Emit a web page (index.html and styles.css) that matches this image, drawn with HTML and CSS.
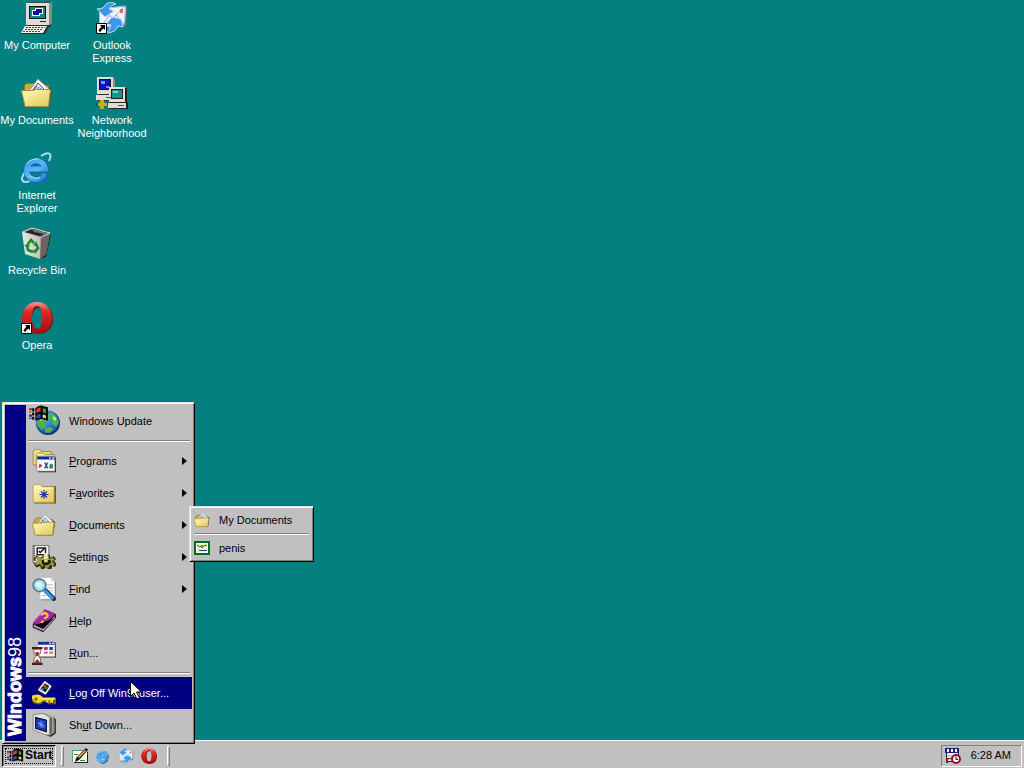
FILE: index.html
```html
<!DOCTYPE html>
<html lang="en">
<head>
<meta charset="utf-8">
<title>Desktop</title>
<link rel="stylesheet" href="styles.css">
</head>
<body>
<svg class="defs" aria-hidden="true">
  <defs>
    <linearGradient id="paper-yellow" x1="0" y1="0" x2="1" y2="1"><stop offset="0" stop-color="#fff9b8"/><stop offset="1" stop-color="#e2c85c"/></linearGradient>
    <linearGradient id="opera-red" x1="0" y1="0" x2="0" y2="1"><stop offset="0" stop-color="#f29a90"/><stop offset=".3" stop-color="#e02a24"/><stop offset="1" stop-color="#a80d10"/></linearGradient>
    <linearGradient id="ie-blue" x1="0" y1="0" x2="1" y2="1"><stop offset="0" stop-color="#3f9bee"/><stop offset=".5" stop-color="#5cb8f8"/><stop offset="1" stop-color="#2277d2"/></linearGradient>
    <linearGradient id="bin-grey" x1="0" y1="0" x2="1" y2="0"><stop offset="0" stop-color="#e8e8e0"/><stop offset=".6" stop-color="#c4c4bc"/><stop offset="1" stop-color="#55504c"/></linearGradient>
    <radialGradient id="globe-blue" cx=".4" cy=".35" r=".7"><stop offset="0" stop-color="#5aa8f4"/><stop offset="1" stop-color="#1748b0"/></radialGradient>
    <symbol id="shortcut" viewBox="0 0 11 11"><path fill="#fff" stroke="#000" d="M.5.5h10v10H.5z"/><path d="M4 2h5v5L7.500 5.500Q5 7 4.500 9L2.500 8Q3 5.500 5.500 3.700z"/></symbol>
    <symbol id="computer" viewBox="0 0 32 32"><path fill="#444" d="M7 2l2-2h22v22l-2 2H7z"/><path fill="#deded6" d="M5 1h23v22H5z"/><path fill="#8b8b86" d="M28 1l3-1v21l-3 3z"/><path fill="#111" d="M8 4h17v13H8z"/><path fill="#0c8a8a" d="M9 5h15v11H9z"/><path fill="#fff" d="M14 6h8v6h-8zM11 8h8v6h-8z"/><path fill="#1010a0" d="M15 7h6v4h-6zM12 9h6v4h-6z"/><path fill="#222" d="M19 19h6v1h-6z"/><path fill="#333" d="M5 23h25v2H5z"/><path fill="#2c2c2c" d="M4 25h24l-4 7H0z"/><path fill="#f2f2ea" d="M4 24h22l-4 7H0z"/><path stroke="#444" stroke-dasharray="2 1" d="M5 25.500h19M4 27.500h18M2 29.500h18"/></symbol>
    <symbol id="folder-open" viewBox="0 0 32 32"><path fill="#4f4614" d="M3 10h26l2 3-3 17H5z"/><path fill="#c9ab40" stroke="#8b7a28" d="M3.500 28V8.500l2-2h7l2 2h13V28z"/><path fill="#fff" stroke="#9a9a9a" d="M8 14L17 2l13 12-3 5H9z"/><path fill="#dfe8fa" stroke="#555" d="M11 14l6-8 8 8z"/><path stroke="#3b58a8" fill="none" d="M13 13l3-4M16 14l2-4M19 14l1-3"/><path fill="url(#paper-yellow)" stroke="#a58e38" d="M.500 13.500h12l2-1h15l-2 17H4z"/></symbol>
    <symbol id="ie" viewBox="0 0 32 32"><path fill="none" stroke="#a6dcfa" stroke-width="2" d="M20 4C27-1 32 1 28 9M4 20C-1 27 0 32 9 29"/><path fill="none" stroke="#1461bb" stroke-width="6" d="M24.500 22A9.500 9.500 0 1 1 25 17.500H8"/><path fill="none" stroke="url(#ie-blue)" stroke-width="5" d="M24 21.500A9.500 9.500 0 1 1 24.500 17H8"/><path stroke="#a9e2ff" fill="none" d="M6 12Q10 6 18 7M9 24q5 4 10 2"/></symbol>
    <symbol id="bin" viewBox="0 0 32 32"><path fill="#282522" d="M27 9l3-1-5 22-6 2z"/><path fill="#777" stroke="#d8d8d8" d="M1.500 5L11 1l18 5-9 5z"/><path fill="#26221f" d="M4 5l8-3 13 4-6 3z"/><path fill="#777" d="M11 2l15 4-3 1-10-2z"/><path fill="url(#bin-grey)" d="M1 5l19 6 9-4-4 20-6 5-15-5z"/><path fill="#6b6460" d="M20 11l9-4-4 20-6 5z"/><path fill="none" stroke="#16882e" stroke-width="2.500" d="M7 17l3-4 3 3M15 17l2 4-3 4M12 25l-5-2-1-4"/><path fill="#16882e" d="M12 18l4-4v5zM15 22v5l-4-3zM3 19l4-3 2 4z"/></symbol>
    <symbol id="opera" viewBox="0 0 32 32"><path fill="#7e1413" fill-rule="evenodd" d="M17 1c9 0 15 7 15 16S26 32 17 32 1 26 1 17 8 1 17 1zm0 5c-4 0-6 5-6 11s2 10 6 10 5-4 5-10-1-11-5-11z"/><path fill="url(#opera-red)" fill-rule="evenodd" d="M16 0c9 0 15 7 15 16s-6 15-15 15S1 25 1 16 7 0 16 0zm0 4c-4 0-5 5-5 12s1 11 5 11 5-4 5-11-1-12-5-12z"/></symbol>
    <symbol id="outlook" viewBox="0 0 32 32"><path fill="#627895" d="M5 8l26-3-1 19-25 4z"/><path fill="#eef3fb" stroke="#adbfd9" d="M3.500 7l26-3-1 18-25 4z"/><path fill="none" stroke="#8fa9cf" d="M4 7l13 9 12-12M4 26l9-12M28 22l-8-9"/><path fill="#e86b62" d="M24 7h3v4h-3z"/><path fill="#3f94ed" stroke="#b7dcff" d="M15 0Q9 1 7 6L1 7l8 8 9-6-5-2q2-4 7-5z"/><path fill="#3f94ed" stroke="#b7dcff" d="M25 17l-9-2-6 7 5 1q-1 5-5 8 10 0 12-7l5 1z"/></symbol>
    <symbol id="network" viewBox="0 0 32 32"><path fill="#333" d="M2 1h17v17h2v6H2z"/><path fill="#deded6" d="M1 0h16v17H1zM0 18h18v5H0z"/><path fill="#8c8c84" d="M17 0l2 2v15l-2-1z"/><path fill="#111" d="M3 2h12v11H3z"/><path fill="#1010bd" d="M4 3h10v9H4z"/><path fill="#6b9cff" d="M5 4h4v3H5zM10 9h3v2h-3z"/><path fill="#0b5a3c" d="M0 26h12v3H0z"/><path fill="#c7ad1e" d="M4 23h4v3h3v3H8v3H4v-3H2v-3h2z"/><path fill="#222" d="M14 11h17v14h1v7H13V11z"/><path fill="#deded6" d="M13 10h16v15H13zM12 26h18v5H12z"/><path fill="#222" d="M15 12h12v10H15z"/><path fill="#169485" d="M16 13h10v8H16z"/><path fill="#7cddc9" d="M17 14h5v2h-5z"/><path stroke="#555" d="M22 28.500h6M10 20.500h5"/></symbol>
    <symbol id="flag" viewBox="0 0 20 16"><path fill="#000" d="M7 3q4-4 8-2l4 1v13q-6-3-12 0zM4 3h2v3H4zM4 7h2v3H4zM4 11h2v3H4z"/><path fill="#b01c28" d="M1 3h3v2H1zM1 6h2v1H1z"/><path fill="#1c2f9c" d="M1 9h3v2H1zM1 12h3v1H1z"/><path fill="#e33b2d" d="M8 4q2-2 4-2v4q-2 0-4 2z"/><path fill="#3aa446" d="M14 3q2 0 3 1v4q-1-1-3-1z"/><path fill="#264bd2" d="M8 10q2-2 4-2v4q-2 0-4 1z"/><path fill="#f3d940" d="M14 9q2 0 3 1v3q-1-1-3-1z"/></symbol>
    <symbol id="update" viewBox="0 0 32 32"><circle cx="20" cy="18" r="12" fill="#102c5c"/><circle cx="19.500" cy="17" r="11.500" fill="url(#globe-blue)"/><path fill="#48b449" d="M9 14l7-6 6 2-1 5-4 2 1 5-4 3-5-5zM23 7l5 4 3 6-3 5-4-3-1-5-3-3zM17 23l5-1 4 2-5 4-4-1z"/><path fill="#c5efb4" d="M11 14l4-3 2 2-4 3zM25 11l3 2v3l-3-2z"/><use href="#flag" width="21" height="17"/></symbol>
    <symbol id="programs" viewBox="0 0 32 32"><path fill="#f1df82" stroke="#8b7a28" d="M1.500 21V3.500l2-3h7l2 3h13V21z"/><path fill="#fff7b0" stroke="#8b7a28" d="M5.500 25V7.500l2-2h7l2 2h13V25z"/><path fill="#222" d="M8 11h24v20H8z"/><path fill="#fff" stroke="#888" d="M6.500 9.500h24v20h-24z"/><path fill="#102b95" d="M7 10h23v4H7z"/><path fill="#fff" d="M23 11h2v2h-2zM27 11h2v2h-2z"/><path fill="#c43c5f" d="M10 19l4 3-4 4-1-3z"/><path fill="#273e91" d="M16 18h2l1 2 1-2h2l-2 4 2 4h-2l-1-2-1 2h-2l2-4z"/><path fill="#269458" d="M25 19l3 2v5h-5v-4z"/></symbol>
    <symbol id="favorites" viewBox="0 0 32 32"><path fill="#695e25" d="M3 7h29v23H3z"/><path fill="url(#paper-yellow)" stroke="#a89542" d="M1.500 28.500V7.500l2-3h8l2 3h16v21z"/><path stroke="#fff" d="M3 9.500h25"/><path stroke="#1933a4" stroke-width="1.500" d="M16 12v12M10 18h12M12 14l8 8M20 14l-8 8"/></symbol>
    <symbol id="settings" viewBox="0 0 32 32"><path fill="#f6f6f6" stroke="#444" d="M1.500.500h21v23h-21z"/><path fill="#fff" stroke="#222" stroke-width="2" d="M7 4h11v9H7z"/><path fill="none" stroke="#111" stroke-width="2" d="M9 8l2 2 6-6"/><path stroke="#555" fill="none" stroke-width="2" stroke-dasharray="2 1" d="M3 1v20M6 14v6"/><path fill="#33310d" d="M17 13h7v4l5-2 3 4-3 3 4 2-2 5-4-1-1 4h-5l-2-3-3 3h-4l-1-4-5 2-4-5 4-3-4-3 4-5 5 3z"/><path fill="#a39f40" d="M17 14h5l1 5 5-2 2 3-4 2 4 3-2 3-4-2-2 4h-4l-1-4-4 3-2-4-5 2-3-3 4-3-3-3 3-3 5 3 3-2z"/><path fill="#eee8a2" d="M16 11h5v8h-5zM4 18l4 2-2 2z"/><path fill="#22210a" d="M13 20h12v4l-4 3h-6l-2-3z"/><path fill="#d8d27c" d="M16 20h5v3h-5z"/></symbol>
    <symbol id="find" viewBox="0 0 32 32"><path fill="#777" d="M12 2h15l5 5v24H12z"/><path fill="#fff" stroke="#bbb" d="M10.500.500h15l5 5v24h-20z"/><path fill="#ddd" d="M25 1v5h6z"/><path stroke="#999" d="M19 10.500h9M20 14.500h8M20 18.500h8M13 24.500h5"/><path stroke="#0c3868" stroke-width="6" stroke-linecap="round" d="M18 18l11 11"/><path stroke="#3d9cea" stroke-width="4" stroke-linecap="round" d="M17 18l10 10"/><circle cx="10" cy="11" r="8.500" fill="#9adce8" stroke="#547b88" stroke-width="2"/><path stroke="#fff" stroke-width="2" d="M6 8h7M5 11h10M7 14h6"/></symbol>
    <symbol id="help" viewBox="0 0 32 32"><path fill="#42153f" d="M1 20L17 1l15 6v5L15 31 1 25z"/><path fill="#a326a0" d="M1 18L17 0l14 6-16 17z"/><path fill="#e8dee7" d="M3 21l12 5L30 10v3L15 29 3 24z"/><path stroke="#857384" d="M4 22l11 5 15-15M4 24l11 4"/><path stroke="#d774d6" d="M2 18L17 1"/><path fill="none" stroke="#ffc23c" stroke-width="3" d="M12 8q5-4 8-1t-4 6"/><path fill="#ffc23c" d="M13 15l3 1-2 3-3-1z"/></symbol>
    <symbol id="run" viewBox="0 0 32 32"><path fill="#222" d="M9 2h23v20H9z"/><path fill="#fff" stroke="#bbb" d="M7.500.500h23v20h-23z"/><path fill="#15329c" d="M8 1h22v4H8z"/><path fill="#fff" d="M23 2h2v2h-2zM27 2h2v2h-2z"/><path fill="#c93258" d="M16 8h5v4h-5z"/><path fill="#293fc5" d="M23 8h5v4h-5z"/><path fill="#e57934" d="M23 14h5v3h-5z"/><path fill="#c25fb4" d="M16 14h5v3h-5z"/><path fill="#4b1918" d="M0 8h14v3H0zM0 29h14v3H0z"/><path fill="#fff4e8" stroke="#753632" d="M2.500 11h9v5l-3 4 3 4v5h-9v-5l3-4-3-4z"/><path fill="#8b2d22" d="M4 15h6l-2 5H6zM3 29l4-5 4 5z"/></symbol>
    <symbol id="logoff" viewBox="0 0 32 32"><path fill="#fff" stroke="#b9b9a2" d="M17 0l9 7-8 11-10-6z"/><path fill="#111" d="M17 3l6 4-5 8-7-4z"/><path fill="#e24234" d="M16 4l3 2-2 3-3-2z"/><path fill="#38a448" d="M19 7l2 1-2 3-2-1z"/><path fill="#397be4" d="M14 9l2 1-1 3-3-2z"/><path fill="#70640b" d="M1 20h13v3h18v8h-5v-3h-2v3h-4v-3h-6q-2 4-8 3T0 27z"/><path fill="#f0d632" fill-rule="evenodd" d="M7 18q5 0 7 4h17v3h-3v4h-4v-3h-2v3h-3v-3h-5q-2 4-7 3T0 23t7-5zm-2 4q-3 1-1 4 4 1 3-3z"/><path stroke="#fff6a0" d="M13 23.500h16"/></symbol>
    <symbol id="shutdown" viewBox="0 0 32 32"><path fill="#30302e" d="M14 0l15 5 3 4v18l-7 5-7-3z"/><path fill="#bcbcb5" d="M14 0l15 5v21l-6 4-6-3z"/><path fill="#65655f" d="M24 5l3 2v19l-3 2zM29 8l2 3v15l-2 2z"/><path fill="#e6e6df" stroke="#777" d="M1.500 2.500l13-2 9 5v22l-4 2-18-7z"/><path fill="#090c36" d="M4 5l16 4v17L4 21z"/><path fill="#1936b6" d="M5 7l14 3v14L5 20z"/><path stroke="#91bfff" d="M12 10v10M8 14l9 3M9 18l6-6M9 12l7 8"/></symbol>
    <symbol id="image-file" viewBox="0 0 16 16"><path fill="#fff" stroke="#096b20" stroke-width="2" d="M1 2h14v12H1z"/><path fill="#edf6bd" d="M3 4h10v8H3z"/><path fill="none" stroke="#195a46" d="M3 5l3 2 2-2v3l3-3 2 1"/><path stroke="#1839bb" d="M5 10.500h8"/></symbol>
    <symbol id="show-desktop" viewBox="0 0 16 16"><path fill="#5b9c7c" d="M0 2h13v12H0z"/><path fill="#222" d="M2 15h14V4h-1v10H2z"/><path fill="#fffbe6" d="M1 3h14v11H1z"/><path fill="#111" d="M14 0l2 2-9 10-4 2 1-4z"/><path fill="#efc24e" d="M13 2l1 1-7 7-1-1z"/><path stroke="#347d4b" d="M2 6.500h4M8 12.500h5"/></symbol>
    <symbol id="scheduler" viewBox="0 0 16 16"><path fill="#eee" stroke="#292929" d="M1.500 2.500h12v11h-12z"/><path fill="#17217d" d="M0 0h14v5H0z"/><path fill="#fff" d="M2 1h2v3H2zM6 1h2v3H6zM10 1h2v3h-2z"/><path stroke="#aaa" d="M2 8h6M2 11h5"/><path fill="#831425" d="M1 10h5v1H3v4H1z"/><circle cx="11" cy="11" r="4" fill="#fff" stroke="#a10925" stroke-width="2"/><path fill="none" stroke="#111" d="M11 8.500v3h2"/></symbol>
  </defs>
</svg>

<main class="desktop">
  <div class="icon-column">
    <button class="shortcut"><svg class="icon-lg"><use href="#computer"/></svg><span>My Computer</span></button>
    <button class="shortcut"><svg class="icon-lg"><use href="#folder-open"/></svg><span>My Documents</span></button>
    <button class="shortcut"><svg class="icon-lg"><use href="#ie"/></svg><span>Internet<br>Explorer</span></button>
    <button class="shortcut"><svg class="icon-lg"><use href="#bin"/></svg><span>Recycle Bin</span></button>
    <button class="shortcut"><svg class="icon-lg"><use href="#opera"/><use href="#shortcut" y="21" width="11" height="11"/></svg><span>Opera</span></button>
  </div>
  <div class="icon-column">
    <button class="shortcut"><svg class="icon-lg"><use href="#outlook"/><use href="#shortcut" y="21" width="11" height="11"/></svg><span>Outlook<br>Express</span></button>
    <button class="shortcut"><svg class="icon-lg"><use href="#network"/></svg><span>Network<br>Neighborhood</span></button>
  </div>
</main>

<nav class="start-menu raised" aria-label="Start menu">
  <div class="brand"><span><b>Windows</b>98</span></div>
  <ul class="menu-list">
    <li><button class="menu-item"><svg class="icon-lg"><use href="#update"/></svg><span>Windows Update</span></button></li>
    <li class="separator" role="separator"></li>
    <li><button class="menu-item has-sub"><svg class="icon-md"><use href="#programs"/></svg><span><u>P</u>rograms</span></button></li>
    <li><button class="menu-item has-sub"><svg class="icon-md"><use href="#favorites"/></svg><span>F<u>a</u>vorites</span></button></li>
    <li class="sub-parent"><button class="menu-item has-sub" aria-expanded="true"><svg class="icon-md"><use href="#folder-open"/></svg><span><u>D</u>ocuments</span></button>
      <ul class="submenu raised">
        <li><button class="menu-item small"><svg class="icon-sm"><use href="#folder-open"/></svg><span>My Documents</span></button></li>
        <li class="separator tight" role="separator"></li>
        <li><button class="menu-item small"><svg class="icon-sm"><use href="#image-file"/></svg><span>penis</span></button></li>
      </ul>
    </li>
    <li><button class="menu-item has-sub"><svg class="icon-md"><use href="#settings"/></svg><span><u>S</u>ettings</span></button></li>
    <li><button class="menu-item has-sub"><svg class="icon-md"><use href="#find"/></svg><span><u>F</u>ind</span></button></li>
    <li><button class="menu-item"><svg class="icon-md"><use href="#help"/></svg><span><u>H</u>elp</span></button></li>
    <li><button class="menu-item"><svg class="icon-md"><use href="#run"/></svg><span><u>R</u>un...</span></button></li>
    <li class="separator" role="separator"></li>
    <li><button class="menu-item selected"><svg class="icon-md"><use href="#logoff"/></svg><span><u>L</u>og Off Win98user...</span></button></li>
    <li><button class="menu-item"><svg class="icon-md"><use href="#shutdown"/></svg><span>Sh<u>u</u>t Down...</span></button></li>
  </ul>
</nav>

<footer class="taskbar">
  <button class="start-button"><svg class="icon-flag"><use href="#flag"/></svg>Start</button>
  <span class="grip"></span>
  <div class="quick-launch">
    <button aria-label="Show Desktop"><svg class="icon-sm"><use href="#show-desktop"/></svg></button>
    <button aria-label="Internet Explorer"><svg class="icon-sm"><use href="#ie"/></svg></button>
    <button aria-label="Outlook Express"><svg class="icon-sm"><use href="#outlook"/></svg></button>
    <button aria-label="Opera"><svg class="icon-sm"><use href="#opera"/></svg></button>
  </div>
  <span class="grip"></span>
  <div class="tray"><svg class="icon-sm"><use href="#scheduler"/></svg><time>6:28 AM</time></div>
</footer>

<svg class="pointer" viewBox="0 0 12 19" aria-hidden="true"><path fill="#fff" stroke="#000" d="M.500.500v15l3.500-3.500 3 6 2.500-1-3-6h5z"/></svg>
</body>
</html>
```
FILE: styles.css
```css
*, *::before, *::after { box-sizing: border-box; }

body {
  margin: 0;
  height: 100vh;
  display: flex;
  flex-direction: column;
  position: relative;
  overflow: hidden;
  background: #048080;
  color: #000;
  font: 11px/13px "Liberation Sans", Arial, sans-serif;
}

button {
  margin: 0;
  padding: 0;
  border: 0;
  background: none;
  color: inherit;
  font: inherit;
}

ul { margin: 0; padding: 0; list-style: none; }
svg { display: block; flex: none; }

.defs { position: absolute; width: 0; height: 0; }
.icon-lg { width: 32px; height: 32px; }
.icon-md { width: 24px; height: 24px; margin: 0 4px; }
.icon-sm { width: 16px; height: 16px; }
.icon-flag { width: 18px; height: 15px; }

.desktop { flex: 1; display: flex; min-height: 0; }
.icon-column { width: 75px; }

.shortcut {
  width: 100%;
  height: 75px;
  padding: 2px 1px 0 0;
  display: flex;
  flex-direction: column;
  align-items: center;
  gap: 5px;
  color: #fff;
  white-space: nowrap;
}

.raised {
  background: #c0c0c0;
  border: 1px solid;
  border-color: #dfdfdf #000 #000 #dfdfdf;
  box-shadow: inset 1px 1px #fff, inset -1px -1px #808080;
}

.start-menu {
  position: absolute;
  left: 2px;
  bottom: 24px;
  width: 193px;
  padding: 2px;
  display: flex;
}

.brand {
  width: 21px;
  display: flex;
  align-items: flex-end;
  justify-content: center;
  padding-bottom: 5px;
  background: #000082;
  color: #fff;
  font-size: 18px;
  line-height: 21px;
}

.brand span { writing-mode: vertical-rl; transform: rotate(180deg); }
.brand b { -webkit-text-stroke: 1px #fff; }

.menu-list { flex: 1; }

.menu-item {
  width: 100%;
  height: 32px;
  padding-left: 2px;
  display: flex;
  align-items: center;
  gap: 9px;
  text-align: left;
  white-space: nowrap;
}

.menu-item.selected { background: #000082; color: #fff; }

.has-sub::after {
  content: "";
  margin-left: auto;
  margin-right: 5px;
  border: 4px solid transparent;
  border-left: 5px solid #000;
  border-right: 0;
}

.separator {
  height: 8px;
  padding: 3px 2px 0;
}

.separator::before {
  content: "";
  display: block;
  height: 2px;
  border-top: 1px solid #808080;
  border-bottom: 1px solid #fff;
}

.sub-parent { position: relative; }

.submenu {
  position: absolute;
  top: -3px;
  left: 163px;
  width: 125px;
  padding: 2px;
}

.menu-item.small { height: 22px; }
.separator.tight { height: 6px; padding-top: 2px; }

.taskbar {
  height: 28px;
  padding: 4px 2px 2px;
  display: flex;
  align-items: center;
  background: #c0c0c0;
  border-top: 1px solid #fff;
}

.start-button {
  width: 54px;
  height: 22px;
  padding-left: 3px;
  display: flex;
  align-items: center;
  gap: 1px;
  border: 1px solid;
  border-color: #000 #fff #fff #000;
  box-shadow: inset 1px 1px #808080;
  outline: 1px dotted #000;
  outline-offset: -4px;
  font-weight: bold;
  font-size: 12px;
}

.grip {
  width: 3px;
  height: 20px;
  margin-left: 5px;
  border: 1px solid;
  border-color: #fff #808080 #808080 #fff;
}

.quick-launch { display: flex; gap: 7px; margin: 0 5px 0 8px; }

.tray {
  margin-left: auto;
  width: 81px;
  height: 22px;
  padding: 0 10px 0 3px;
  display: flex;
  align-items: center;
  justify-content: space-between;
  border: 1px solid;
  border-color: #808080 #fff #fff #808080;
}

.pointer {
  position: absolute;
  left: 130px;
  top: 681px;
  width: 12px;
  height: 19px;
}
```
